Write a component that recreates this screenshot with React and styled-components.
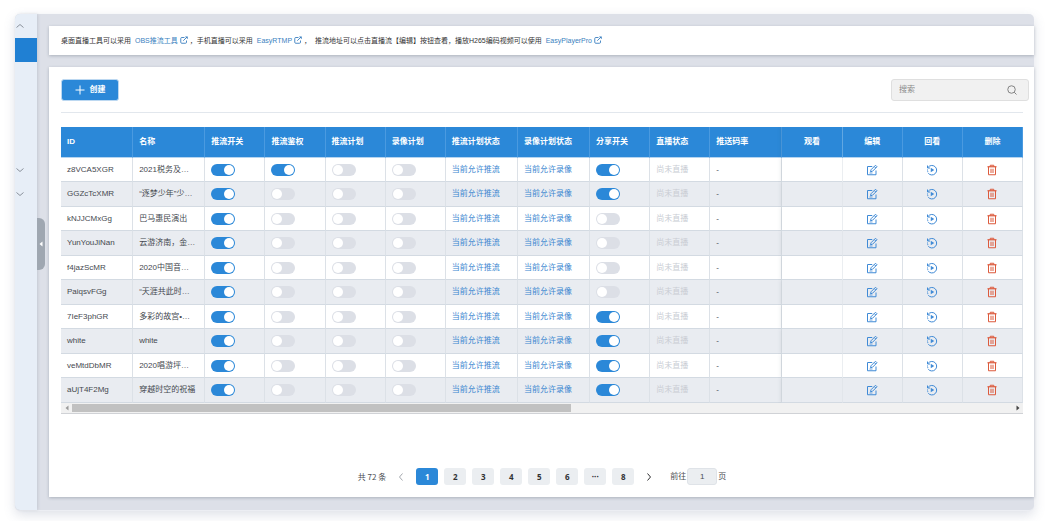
import React, { useState } from 'react';
import styled, { createGlobalStyle, css } from 'styled-components';

const GlobalStyle = createGlobalStyle`
  * {
    box-sizing: border-box;
  }

  body {
    margin: 0;
    background: #fff;
    color: #45494f;
    font-family: 'Liberation Sans', 'Noto Sans CJK SC', sans-serif;
    font-size: 8px;
    line-height: 12px;
  }

  button,
  input {
    font: inherit;
  }
`;

const Window = styled.div`
  position: relative;
  display: flex;
  margin: 14px 25px 10px 15px;
  background: #dde0e8;
  border-bottom: 1px solid #eceef3;
  border-radius: 5px;
  box-shadow: 0 4px 12px rgba(90, 105, 140, 0.2);
`;

const Sidebar = styled.nav`
  flex: none;
  width: 22px;
  background: #e7eef7;
  border-radius: 5px 0 0 5px;
  box-shadow: 1px 0 3px rgba(100, 110, 130, 0.2);
`;

const MenuItem = styled.button`
  display: flex;
  align-items: center;
  width: 100%;
  height: 24px;
  padding: 0 0 0 1px;
  border: 0;
  color: #8b929c;
  background: ${(props) => (props.$active ? '#2080d3' : 'transparent')};
`;

const CollapseHandle = styled.button`
  position: absolute;
  top: 204px;
  left: 22px;
  display: flex;
  align-items: center;
  justify-content: center;
  width: 8px;
  height: 52px;
  padding: 0;
  border: 0;
  border-radius: 0 6px 6px 0;
  background: #9fa7b1;
  color: #fff;
`;

const Content = styled.main`
  flex: 1;
  min-width: 0;
  display: flex;
  flex-direction: column;
  gap: 12px;
  padding: 12px 0 13px 12px;
`;

const Card = styled.section`
  padding: 12px 11px 12px 12px;
  background: #fff;
  box-shadow: 0 1px 3px rgba(60, 70, 90, 0.3);
`;

const Notice = styled(Card)`
  padding: 8px 12px;
  font-size: 7px;
  line-height: 13px;
  color: #333;
  white-space: nowrap;
`;

const NoticeLink = styled.a`
  margin: 0 2px 0 4px;
  color: #3a7fc0;
  text-decoration: none;

  svg {
    margin-left: 2px;
    vertical-align: -1px;
  }
`;

const Toolbar = styled.div`
  display: flex;
  justify-content: space-between;
  margin-right: -6px;
`;

const CreateButton = styled.button`
  display: flex;
  align-items: center;
  justify-content: center;
  gap: 5px;
  width: 58px;
  height: 22px;
  padding: 0;
  border: 1px solid #bcd8f1;
  border-radius: 3px;
  background: #2b88d8;
  color: #fff;
  font-weight: bold;
`;

const SearchBox = styled.label`
  display: flex;
  align-items: center;
  width: 138px;
  height: 22px;
  padding: 0 11px 0 7px;
  border: 1px solid #dfdfdf;
  border-radius: 3px;
  background: #f1f1f1;
  color: #777;

  input {
    flex: 1;
    min-width: 0;
    padding: 0;
    border: 0;
    background: none;
  }

  input::placeholder {
    color: #8a8a8a;
  }
`;

const Divider = styled.hr`
  height: 1px;
  margin: 11px 0 14px;
  border: 0;
  background: #e2e7ed;
`;

const Table = styled.table`
  width: 100%;
  table-layout: fixed;
  border-spacing: 0;
`;

const cell = css`
  padding: 0 6px;
  border-right: 1px solid #dce1e7;
  text-align: ${(props) => (props.$fixed ? 'center' : 'left')};
  white-space: nowrap;
  ${(props) =>
    props.$edge &&
    css`
      box-shadow: -1px 0 4px rgba(60, 70, 90, 0.12);
      clip-path: inset(0 0 0 -6px);
    `}
`;

const Th = styled.th`
  ${cell}
  height: 31px;
  border-right-color: #4a9ae0;
  border-bottom: 1px solid #b5d4f0;
  background: #2b88d8;
  color: #fff;
`;

const Td = styled.td`
  ${cell}
  border-bottom: 1px solid #d3dae2;
  color: ${(props) => props.$color || 'inherit'};
`;

const Tr = styled.tr`
  height: 24px;

  &:nth-child(even) {
    height: 25px;
    background: #e9ecf1;
  }
`;

const Switch = styled.input.attrs({ type: 'checkbox' })`
  display: block;
  appearance: none;
  width: 24px;
  height: 12px;
  margin: 0;
  padding: 1px;
  border-radius: 6px;
  background: #dcdfe6;

  &::before {
    content: '';
    display: block;
    width: 10px;
    height: 10px;
    border-radius: 50%;
    background: #fff;
  }

  &:checked {
    background: #2b88d8;
  }

  &:checked::before {
    margin-left: 12px;
  }
`;

const IconButton = styled.button`
  display: block;
  height: 12px;
  margin: 0 auto;
  padding: 0;
  border: 0;
  background: none;
  color: ${(props) => (props.$danger ? '#dc5a3c' : '#3f8ad6')};

  svg {
    display: block;
  }
`;

const ScrollTrack = styled.div`
  display: flex;
  align-items: center;
  gap: 3px;
  height: 11px;
  padding: 0 3px 1px 4px;
  border-bottom: 1px solid #d0d2d6;
  background: #f1f1f1;
  color: #444;

  svg:first-child {
    color: #9a9a9a;
  }
`;

const ScrollRail = styled.div`
  flex: 1;
`;

const ScrollThumb = styled.div`
  width: 53%;
  height: 8px;
  background: #c1c1c1;
`;

const Pagination = styled.div`
  display: flex;
  align-items: center;
  justify-content: center;
  margin-top: 54px;
  color: #4a4d52;
`;

const Pages = styled.div`
  display: flex;
  gap: 6px;
  margin: 0 11px;
`;

const PageButton = styled.button`
  width: 22px;
  height: 17px;
  padding: 0;
  border: 0;
  border-radius: 3px;
  background: ${(props) => (props.$active ? '#2b88d8' : '#ebeef1')};
  color: ${(props) => (props.$active ? '#fff' : '#303133')};
  font-family: 'Open Sans', 'Noto Sans CJK SC', sans-serif;
  font-weight: bold;
`;

const ArrowButton = styled.button`
  display: flex;
  padding: 0;
  border: 0;
  background: none;
  color: ${(props) => (props.disabled ? '#a4a8ae' : '#303133')};
`;

const Total = styled.span`
  margin-right: 11px;
  font-family: 'Noto Sans CJK SC', sans-serif;
`;

const Jumper = styled.label`
  display: flex;
  align-items: center;
  gap: 1px;
  margin-left: 17px;

  input {
    width: 30px;
    height: 17px;
    padding: 0;
    border: 1px solid #dfe3e8;
    border-radius: 3px;
    background: #ebeef1;
    color: #4a4d52;
    text-align: center;
  }
`;

const Chevron = ({ d, size = 8 }) => (
  <svg width={size} height={size} viewBox="0 0 8 8" fill="none" stroke="currentColor">
    <path d={d} />
  </svg>
);

const UP = 'M.5 5.5 4 2.5 7.5 5.5';
const DOWN = 'M.5 2.5 4 5.5 7.5 2.5';
const LEFT = 'M5.5 .5 2.5 4 5.5 7.5';
const RIGHT = 'M2.5 .5 5.5 4 2.5 7.5';

const Triangle = ({ d }) => (
  <svg width="4" height="6" viewBox="0 0 4 6" fill="currentColor">
    <path d={d} />
  </svg>
);

const TRI_LEFT = 'M3.5 .5v5L.5 3z';
const TRI_RIGHT = 'M.5 .5v5L3.5 3z';

const ExternalIcon = () => (
  <svg width="8" height="8" viewBox="0 0 16 16" fill="none" stroke="currentColor" strokeWidth="1.8">
    <path d="M9 3H3.500A2 2 0 0 0 1.500 5v7.500a2 2 0 0 0 2 2H11a2 2 0 0 0 2-2V9" />
    <path d="M6.500 9.500 14 2" />
    <path d="M10 1h5.500v5.500z" fill="currentColor" stroke="none" />
  </svg>
);

const EditIcon = () => (
  <svg width="12" height="12" viewBox="0 0 24 24" fill="none" stroke="currentColor" strokeWidth="2">
    <path d="M12.500 5H3v16.500h17V13" />
    <path d="M9 15.500 10 11.500 19 2.500 22 5.500 13 14.500zM16.500 5 19.500 8" />
    <path d="M7 18h6" strokeWidth="1.500" />
  </svg>
);

const ReplayIcon = () => (
  <svg width="12" height="12" viewBox="0 0 24 24" fill="none" stroke="currentColor" strokeWidth="2">
    <path d="M4 7A9.500 9.500 0 1 1 4.500 18.500" />
    <path d="M3 3v5h5" />
    <path d="M2 12h2M2.500 15.500l2-.500" />
    <path d="M9.500 7.500v9l7-4.500z" fill="currentColor" stroke="none" />
  </svg>
);

const TrashIcon = () => (
  <svg width="12" height="12" viewBox="0 0 24 24" fill="none" stroke="currentColor" strokeWidth="2">
    <path d="M3 5.500h18" strokeWidth="2.500" />
    <path d="M8.500 5V2.500h7V5M5 6v15.500h14V6M10 9.500v8.500M14 9.500v8.500" />
  </svg>
);

const SearchIcon = () => (
  <svg width="10" height="10" viewBox="0 0 20 20" fill="none" stroke="currentColor" strokeWidth="1.8">
    <circle cx="9" cy="9" r="7.500" />
    <path d="M14.500 14.500 19 19" />
  </svg>
);

const PlusIcon = () => (
  <svg width="10" height="10" viewBox="0 0 10 10" stroke="currentColor">
    <path d="M5 .5v9M.5 5h9" />
  </svg>
);

const columns = [
  { title: 'ID', width: 72 },
  { title: '名称', width: 72 },
  { title: '推流开关', width: 60 },
  { title: '推流鉴权', width: 60 },
  { title: '推流计划', width: 60 },
  { title: '录像计划', width: 60 },
  { title: '推流计划状态', width: 72 },
  { title: '录像计划状态', width: 72 },
  { title: '分享开关', width: 60 },
  { title: '直播状态', width: 60 },
  { title: '推送码率', width: 72 },
  { title: '观看', width: 60, fixed: true, edge: true },
  { title: '编辑', width: 60, fixed: true },
  { title: '回看', width: 60, fixed: true },
  { title: '删除', width: 60, fixed: true },
];

const initialStreams = [
  { id: 'z8VCA5XGR', name: '2021税务及…', push: true, auth: true, share: true },
  { id: 'GGZcTcXMR', name: '“逐梦少年”少…', push: true, share: true },
  { id: 'kNJJCMxGg', name: '巴马惠民演出', push: true },
  { id: 'YunYouJiNan', name: '云游济南，金…', push: true },
  { id: 'f4jazScMR', name: '2020中国音…', push: true },
  { id: 'PaiqsvFGg', name: '“天涯共此时…', push: true },
  { id: '7IeF3phGR', name: '多彩的故宫•…', push: true, share: true },
  { id: 'white', name: 'white', push: true, share: true },
  { id: 'veMtdDbMR', name: '2020唱游坪…', push: true, share: true },
  { id: 'aUjT4F2Mg', name: '穿越时空的祝福', push: true, share: true },
];

const pages = ['1', '2', '3', '4', '5', '6', '···', '8'];

const App = () => {
  const [streams, setStreams] = useState(initialStreams);

  const toggle = (id, key) =>
    setStreams(streams.map((s) => (s.id === id ? { ...s, [key]: !s[key] } : s)));

  const renderSwitch = (stream, key, label) => (
    <Td>
      <Switch
        aria-label={label}
        checked={!!stream[key]}
        onChange={() => toggle(stream.id, key)}
      />
    </Td>
  );

  return (
    <>
      <GlobalStyle />
      <Window>
        <Sidebar>
          <MenuItem aria-label="收起">
            <Chevron d={UP} />
          </MenuItem>
          <MenuItem $active aria-label="直播" />
          <MenuItem as="div" />
          <MenuItem as="div" />
          <MenuItem as="div" />
          <MenuItem as="div" />
          <MenuItem aria-label="展开">
            <Chevron d={DOWN} />
          </MenuItem>
          <MenuItem aria-label="展开">
            <Chevron d={DOWN} />
          </MenuItem>
        </Sidebar>
        <Content>
          <Notice>
            桌面直播工具可以采用
            <NoticeLink href="#obs">
              OBS推流工具
              <ExternalIcon />
            </NoticeLink>
            ，手机直播可以采用
            <NoticeLink href="#rtmp">
              EasyRTMP
              <ExternalIcon />
            </NoticeLink>
            ，&nbsp; 推流地址可以点击直播流【编辑】按钮查看，播放H265编码视频可以使用
            <NoticeLink href="#player">
              EasyPlayerPro
              <ExternalIcon />
            </NoticeLink>
          </Notice>
          <Card>
            <Toolbar>
              <CreateButton>
                <PlusIcon />
                创建
              </CreateButton>
              <SearchBox>
                <input type="text" placeholder="搜索" aria-label="搜索" />
                <SearchIcon />
              </SearchBox>
            </Toolbar>
            <Divider />
            <Table>
              <colgroup>
                {columns.map((c) => (
                  <col key={c.title} width={c.width} />
                ))}
              </colgroup>
              <thead>
                <tr>
                  {columns.map((c) => (
                    <Th key={c.title} $fixed={c.fixed} $edge={c.edge}>
                      {c.title}
                    </Th>
                  ))}
                </tr>
              </thead>
              <tbody>
                {streams.map((stream) => (
                  <Tr key={stream.id}>
                    <Td>{stream.id}</Td>
                    <Td>{stream.name}</Td>
                    {renderSwitch(stream, 'push', '推流开关')}
                    {renderSwitch(stream, 'auth', '推流鉴权')}
                    {renderSwitch(stream, 'pushPlan', '推流计划')}
                    {renderSwitch(stream, 'recordPlan', '录像计划')}
                    <Td $color="#3a86d0">当前允许推流</Td>
                    <Td $color="#3a86d0">当前允许录像</Td>
                    {renderSwitch(stream, 'share', '分享开关')}
                    <Td $color="#c9cdd4">尚未直播</Td>
                    <Td>-</Td>
                    <Td $fixed $edge />
                    <Td $fixed>
                      <IconButton aria-label="编辑">
                        <EditIcon />
                      </IconButton>
                    </Td>
                    <Td $fixed>
                      <IconButton aria-label="回看">
                        <ReplayIcon />
                      </IconButton>
                    </Td>
                    <Td $fixed>
                      <IconButton $danger aria-label="删除">
                        <TrashIcon />
                      </IconButton>
                    </Td>
                  </Tr>
                ))}
              </tbody>
            </Table>
            <ScrollTrack>
              <Triangle d={TRI_LEFT} />
              <ScrollRail>
                <ScrollThumb />
              </ScrollRail>
              <Triangle d={TRI_RIGHT} />
            </ScrollTrack>
            <Pagination>
              <Total>共 72 条</Total>
              <ArrowButton disabled aria-label="上一页">
                <Chevron d={LEFT} />
              </ArrowButton>
              <Pages>
                {pages.map((page) => (
                  <PageButton key={page} $active={page === '1'}>
                    {page}
                  </PageButton>
                ))}
              </Pages>
              <ArrowButton aria-label="下一页">
                <Chevron d={RIGHT} />
              </ArrowButton>
              <Jumper>
                前往
                <input type="text" defaultValue="1" />
                页
              </Jumper>
            </Pagination>
          </Card>
        </Content>
        <CollapseHandle aria-label="收起菜单">
          <Triangle d={TRI_LEFT} />
        </CollapseHandle>
      </Window>
    </>
  );
};

export default App;
